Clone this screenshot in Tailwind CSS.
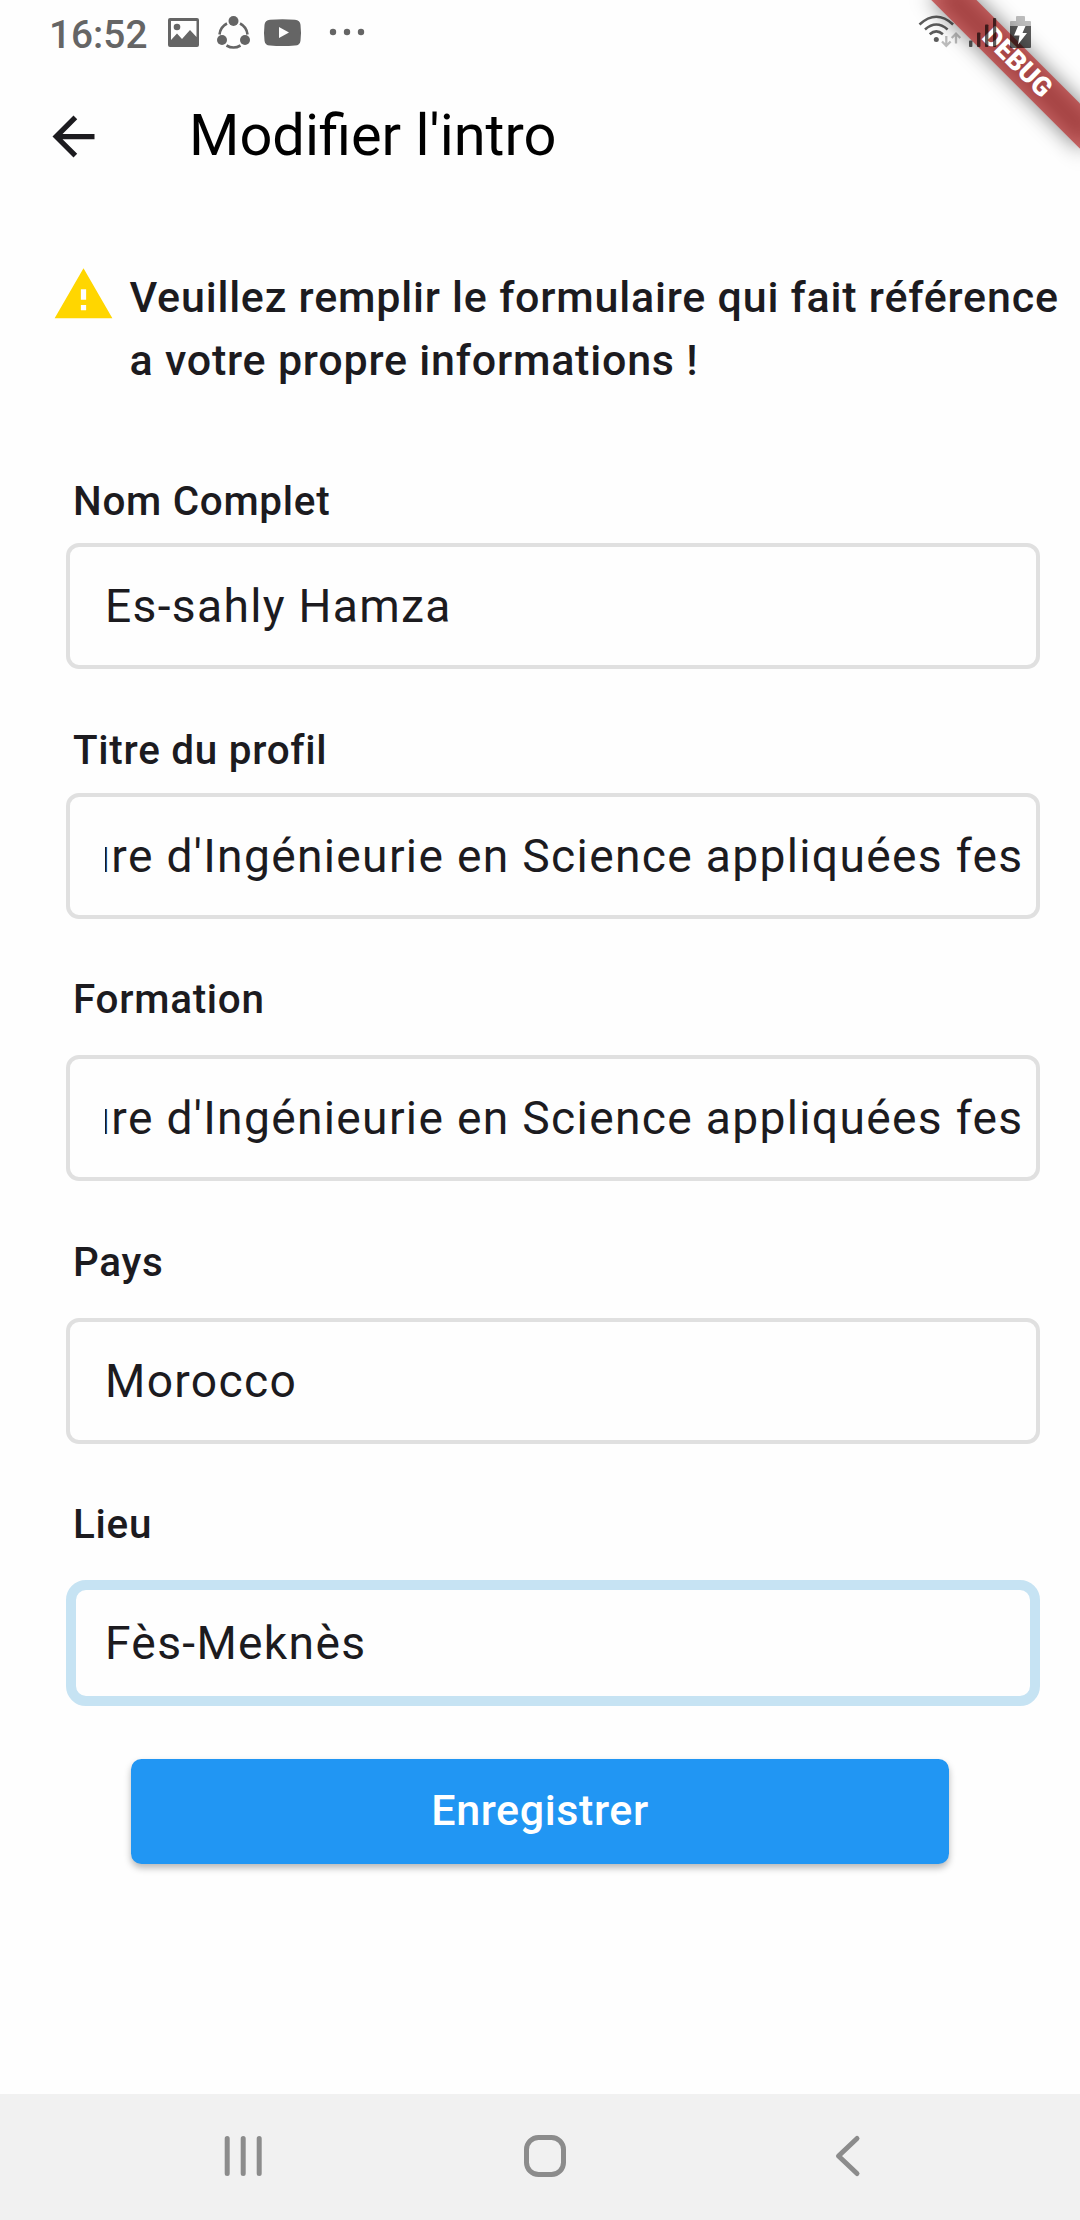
<!DOCTYPE html>
<html lang="fr">
<head>
<meta charset="utf-8">
<title>Modifier l'intro</title>
<script src="https://cdn.jsdelivr.net/npm/@tailwindcss/browser@4"></script>
</head>
<body class="bg-[#fefefe]">
<div class="relative flex h-[2220px] w-[1080px] flex-col overflow-hidden bg-[#fefefe] font-['Roboto',sans-serif] text-[#1c1b1f]">

  <!-- Status bar -->
  <header class="relative z-20 flex h-[63px] items-start text-[#656565]">
    <span class="ml-[49px] mt-[12px] w-[119px] text-[38.800px] leading-[46px] font-medium">16:52</span>
    <svg class="h-[63px] w-[200px]" viewBox="168 0 200 63" fill="currentColor">
      <path fill-rule="evenodd" d="M170 18h27q2 0 2 2v25q0 2-2 2h-27q-2 0-2-2v-25q0-2 2-2zM171 21v19l6-6.500 5 5.500 8-9 6.500 7v-16z"/>
      <circle cx="177" cy="27" r="3.300"/>
      <g fill="none" stroke="currentColor" stroke-width="2.600"><path d="M227 23.500a14 14 0 0 0-7.500 11"/><path d="M240 23.500a14 14 0 0 1 7.500 11"/><path d="M226.500 45.500a14 14 0 0 0 14 0"/></g>
      <circle cx="233.500" cy="21" r="5"/><circle cx="222" cy="40" r="5"/><circle cx="245" cy="40" r="5"/>
      <path fill-rule="evenodd" d="M270 19.700q12.500-1 25 0q5 .3 5.500 5q1 8 0 16q-.5 4.500-5.500 4.800q-12.500 1-25 0q-5-.3-5.500-4.800q-1-8 0-16q.5-4.700 5.500-5zM279 27v11l10-5.500z"/>
      <circle cx="333" cy="32" r="3.200"/><circle cx="347" cy="32" r="3.200"/><circle cx="361" cy="32" r="3.200"/>
    </svg>
    <svg class="ml-auto mr-[40px] h-[63px] w-[124px]" viewBox="916 0 124 63">
      <g fill="none" stroke="#000" stroke-opacity=".64" stroke-width="2.600"><path d="M919.500 24.500q16.800-15.500 33.600 0"/><path d="M925 29.500q11.300-10 22.600 0"/><path d="M929.700 34.300q6.600-5.800 13.200 0"/></g>
      <circle cx="936.300" cy="39.500" r="2.500" fill="#000" fill-opacity=".64"/>
      <g fill="none" stroke="#000" stroke-opacity=".26" stroke-width="2.300"><path d="M946.300 36v9.500M942 41.500l4.300 4.300 4.300-4.300M956 43.500v-9.500M951.700 38l4.300-4.300 4.300 4.300"/></g>
      <g fill="#000" fill-opacity=".64"><rect x="969" y="40.500" width="3.400" height="6.500" rx=".8"/><rect x="977" y="32.500" width="3.400" height="14.500" rx=".8"/><rect x="985" y="24.500" width="3.400" height="22.500" rx=".8"/><rect x="993" y="18" width="3.200" height="29" rx=".8"/>
      <path d="M1010 26h21v21q0 1-1 1h-19q-1 0-1-1z"/></g>
      <path d="M1010 26v-4q0-1 1-1h5v-4q0-1 1-1h7q1 0 1 1v4h5q1 0 1 1v4z" fill="#000" fill-opacity=".25"/>
      <path d="M1018 26h7.500l-3 7h4.500l-9 11.500 1.500-9h-5.500z" fill="#fff"/>
    </svg>
  </header>

  <!-- Debug ribbon -->
  <div class="absolute left-[912.400px] top-[46.900px] z-10 h-[31.500px] w-[210px] rotate-45">
    <div class="absolute inset-0 bg-black/50 blur-[10.400px]"></div>
    <div class="relative flex h-full items-center justify-center bg-[#b71c1c]/63">
      <span class="text-[26.800px] leading-none font-black text-white">DEBUG</span>
    </div>
  </div>

  <!-- App bar -->
  <div class="flex h-[147px] items-center pl-[42px]">
    <svg class="size-[63px]" viewBox="0 0 24 24" fill="currentColor"><path d="M20 11H7.830l5.590-5.590L12 4l-8 8 8 8 1.410-1.410L7.830 13H20v-2z"/></svg>
    <h1 class="ml-[84px] pb-[3px] text-[57.750px] leading-[67px] text-black">Modifier l'intro</h1>
  </div>

  <main class="flex flex-col">
    <div class="mt-[53px] flex h-[126px] items-start pl-[52px]">
      <svg class="size-[63px] shrink-0" viewBox="0 0 24 24" fill="#ffd600"><path d="M1 21h22L12 2 1 21zm12-3h-2v-2h2v2zm0-4h-2v-4h2v4z"/></svg>
      <p class="ml-[14.500px] mt-[3px] text-[43px] leading-[63px] font-medium tracking-[0.785px] whitespace-nowrap">Veuillez remplir le formulaire qui fait référence<br>a votre propre informations !</p>
    </div>

    <form class="flex flex-col">
      <label class="mt-[84px] ml-[73px] h-[70px] pt-[5px] text-[40.425px] leading-[48px] font-medium tracking-[0.720px]">Nom Complet</label>
      <div class="ml-[66px] flex h-[126px] w-[974px] items-center rounded-[13px] border-4 border-[#e0e0e0] pt-[2px] pl-[35px] text-[46.200px] tracking-[1.3125px]">Es-sahly Hamza</div>

      <label class="mt-[54px] ml-[73px] h-[70px] pt-[4px] text-[40.425px] leading-[48px] font-medium tracking-[0.720px]">Titre du profil</label>
      <div class="ml-[66px] flex h-[126px] w-[974px] items-center rounded-[13px] border-4 border-[#e0e0e0] pt-[2px] pl-[35px] pr-[12.500px] text-[46.200px] tracking-[1.3125px]"><div class="flex w-full justify-end overflow-hidden whitespace-nowrap">ure d'Ingénieurie en Science appliquées fes</div></div>

      <label class="mt-[53px] ml-[73px] h-[83px] pt-[4px] text-[40.425px] leading-[48px] font-medium tracking-[0.720px]">Formation</label>
      <div class="ml-[66px] flex h-[126px] w-[974px] items-center rounded-[13px] border-4 border-[#e0e0e0] pt-[2px] pl-[35px] pr-[12.500px] text-[46.200px] tracking-[1.3125px]"><div class="flex w-full justify-end overflow-hidden whitespace-nowrap">ure d'Ingénieurie en Science appliquées fes</div></div>

      <label class="mt-[54px] ml-[73px] h-[83px] pt-[4px] text-[40.425px] leading-[48px] font-medium tracking-[0.720px]">Pays</label>
      <div class="ml-[66px] flex h-[126px] w-[974px] items-center rounded-[13px] border-4 border-[#e0e0e0] pt-[2px] pl-[35px] text-[46.200px] tracking-[1.3125px]">Morocco</div>

      <label class="mt-[53px] ml-[73px] h-[83px] pt-[4px] text-[40.425px] leading-[48px] font-medium tracking-[0.720px]">Lieu</label>
      <div class="ml-[66px] flex h-[126px] w-[974px] items-center rounded-[20px] border-[10.500px] border-[#c6e3f3] pt-[2px] pl-[29px] text-[46.200px] tracking-[1.3125px]">Fès-Meknès</div>

      <button type="button" class="mt-[53px] ml-[131px] flex h-[105px] w-[818px] items-center justify-center rounded-[10.500px] bg-[#2196f3] pb-[2px] text-[43px] font-medium tracking-[0.600px] text-white shadow-[0_4px_7px_rgba(0,0,0,0.28)]">Enregistrer</button>
    </form>
  </main>

  <!-- System navigation -->
  <nav class="mt-auto h-[126px] bg-[#f1f1f1]">
    <svg class="h-[126px] w-[1080px]" viewBox="0 2094 1080 126" fill="none" stroke="#8c8c8c" stroke-width="5" stroke-linecap="round" stroke-linejoin="round">
      <path d="M227.200 2138.500v35M243.200 2138.500v35M259.200 2138.500v35"/>
      <rect x="526.500" y="2137.500" width="37" height="37" rx="12"/>
      <path d="M857 2138.500l-18.500 17.500 18.500 17.500"/>
    </svg>
  </nav>
</div>
</body>
</html>
